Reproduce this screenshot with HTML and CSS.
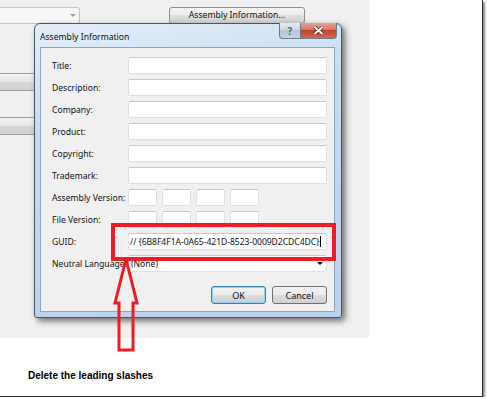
FILE: index.html
```html
<!DOCTYPE html>
<html lang="en">
<head>
    <meta charset="UTF-8">
    <title>Assembly Information</title>
    <link rel="stylesheet" href="styles.css">
</head>
<body>
    <div class="page">
        <div class="app">
            <!-- controls of the project page behind the dialog -->
            <div class="toolbar">
                <div class="combo"><span class="combo-arrow"></span></div>
                <div class="bg-button">Assembly Information...</div>
            </div>
            <div class="bg-bar bar-one"></div>
            <div class="bg-bar bar-two"></div>

            <div class="dialog">
                <div class="titlebar">
                    <span class="title">Assembly Information</span>
                    <div class="caption-buttons">
                        <span class="help-btn">?</span>
                        <span class="close-btn">
                            <svg width="11" height="9" viewBox="0 0 11 9">
                                <path d="M1.5 1 L9.5 8 M9.5 1 L1.5 8" stroke="#5a2418" stroke-width="3.4" fill="none"/>
                                <path d="M1.5 1 L9.5 8 M9.5 1 L1.5 8" stroke="#fff" stroke-width="2" fill="none"/>
                            </svg>
                        </span>
                    </div>
                </div>
                <div class="client">
                    <div class="form">
                        <label>Title:</label><div class="field"></div>
                        <label>Description:</label><div class="field"></div>
                        <label>Company:</label><div class="field"></div>
                        <label>Product:</label><div class="field"></div>
                        <label>Copyright:</label><div class="field"></div>
                        <label>Trademark:</label><div class="field"></div>
                        <label>Assembly Version:</label>
                        <div class="version">
                            <div class="field"></div><div class="field"></div><div class="field"></div><div class="field"></div>
                        </div>
                        <label>File Version:</label>
                        <div class="version">
                            <div class="field"></div><div class="field"></div><div class="field"></div><div class="field"></div>
                        </div>
                        <label>GUID:</label>
                        <div class="field guid">// {6B8F4F1A-0A65-421D-8523-0009D2CDC4DC}<span class="caret"></span></div>
                        <label>Neutral Language:</label>
                        <div class="field select">(None)<span class="select-arrow"></span></div>
                    </div>
                    <div class="buttons">
                        <button class="btn btn-default">OK</button>
                        <button class="btn">Cancel</button>
                    </div>
                </div>
            </div>
        </div>

        <!-- red annotations -->
        <div class="highlight"></div>
        <svg class="arrow" width="30" height="100" viewBox="0 0 30 100">
            <polygon points="13,3 24,47 20,47 20,94 6,94 6,47 2,47" fill="none" stroke="#ee1c24" stroke-width="3" stroke-linejoin="miter"/>
        </svg>

        <p class="note">Delete the leading slashes</p>
    </div>
</body>
</html>
```

FILE: styles.css
```css
body {
    margin: 0;
    background-color: #fff;
    font-family: "Noto Sans", "Open Sans", sans-serif;
    color: #111;
}

.page {
    position: relative;
    width: 483px;
    height: 397px;
    box-sizing: border-box;
    border-right: 1px solid #2b2b2b;
    border-bottom: 1px solid #2b2b2b;
    box-shadow: 2px 2px 2px rgba(0, 0, 0, 0.45);
}

.app {
    position: relative;
    width: 369px;
    height: 338px;
    background-color: #f0f0f0;
    overflow: hidden;
}

/* background controls */
.toolbar {
    display: flex;
    padding-top: 7px;
}

.combo {
    width: 80px;
    height: 17px;
    box-sizing: border-box;
    border: 1px solid #c9c9c9;
    border-left: none;
    border-radius: 0 3px 3px 0;
    background-color: #f7f7f7;
    display: flex;
    justify-content: flex-end;
    align-items: center;
    padding-right: 3px;
}

.combo-arrow {
    border-left: 3px solid transparent;
    border-right: 3px solid transparent;
    border-top: 3px solid #a0a0a0;
}

.bg-button {
    margin-left: 89px;
    width: 136px;
    height: 17px;
    box-sizing: border-box;
    border: 1px solid #8e8f8f;
    border-radius: 3px;
    background: linear-gradient(#f4f4f4, #ececec 50%, #dedede 50%, #d2d2d2);
    font-size: 8.6px;
    line-height: 15px;
    text-align: center;
}

.bg-bar {
    width: 40px;
    height: 18px;
    box-sizing: border-box;
    border: 1px solid #9c9c9c;
    border-left: none;
    background: linear-gradient(#f2f2f2, #e6e6e6 50%, #d8d8d8 50%, #d0d0d0);
}

.bar-one {
    margin-top: 49px;
}

.bar-two {
    margin-top: 26px;
}

/* dialog window */
.dialog {
    position: absolute;
    left: 34px;
    top: 23px;
    width: 308px;
    height: 295px;
    box-sizing: border-box;
    border: 1px solid #46566a;
    border-radius: 6px 6px 3px 3px;
    background: linear-gradient(170deg, #e4eef9 0%, #c7dbf0 30%, #b9d1ea 100%);
    box-shadow: 3px 3px 6px rgba(0, 0, 0, 0.55);
    display: flex;
    flex-direction: column;
    padding: 0 6px 5px 5px;
}

.titlebar {
    height: 23px;
    display: flex;
    justify-content: space-between;
    align-items: flex-start;
    margin-right: -2px;
}

.title {
    font-size: 8.6px;
    line-height: 12px;
    padding-top: 7px;
}

.caption-buttons {
    display: flex;
    margin-top: -1px;
}

.help-btn,
.close-btn {
    height: 16px;
    box-sizing: border-box;
    display: flex;
    justify-content: center;
    align-items: center;
    border: 1px solid #6d7b8d;
    border-top: none;
}

.help-btn {
    width: 21px;
    border-radius: 0 0 0 4px;
    border-right: none;
    background: linear-gradient(#e3ebf4, #c9d6e4 50%, #b7c6d8 50%, #c4d2e2);
    font-size: 10px;
    font-weight: bold;
    color: #5a6570;
}

.close-btn {
    width: 37px;
    border-radius: 0 0 4px 0;
    background: linear-gradient(#e8a393, #d4715f 50%, #c2422c 50%, #cf6b51);
}

.client {
    flex: 1;
    background-color: #f0f0f0;
    border: 1px solid #8fa4be;
    padding: 9px 0 0 11px;
}

.form {
    display: grid;
    grid-template-columns: 76px 199px;
    grid-auto-rows: 17px;
    row-gap: 5px;
    font-size: 8.6px;
}

.form label {
    display: flex;
    align-items: center;
    white-space: nowrap;
}

.field {
    background-color: #fff;
    box-sizing: border-box;
    border: 1px solid #dde1e6;
    border-top-color: #c6cad0;
    border-radius: 2px;
}

.version {
    display: flex;
    gap: 5px;
}

.version .field {
    width: 29px;
}

.guid {
    display: flex;
    align-items: center;
    padding-left: 1px;
    white-space: nowrap;
    letter-spacing: -0.05px;
}

.caret {
    width: 1px;
    height: 11px;
    background-color: #000;
    margin-left: 1px;
}

.select {
    display: flex;
    align-items: center;
    justify-content: space-between;
    padding: 0 3px 0 2px;
}

.select-arrow {
    border-left: 3px solid transparent;
    border-right: 3px solid transparent;
    border-top: 3px solid #000;
}

.buttons {
    width: 275px;
    display: flex;
    justify-content: flex-end;
    gap: 6px;
    margin-top: 14px;
}

.btn {
    width: 55px;
    height: 18px;
    padding: 0;
    border: 1px solid #707070;
    border-radius: 3px;
    background: linear-gradient(#f2f2f2, #ebebeb 50%, #dddddd 50%, #cfcfcf);
    font-family: "Noto Sans", sans-serif;
    font-size: 9px;
    color: #111;
}

.btn-default {
    border-color: #3c7fb1;
    box-shadow: inset 0 0 0 1px #98d1ef;
}

/* annotations */
.highlight {
    position: absolute;
    left: 111px;
    top: 223px;
    width: 225px;
    height: 38px;
    box-sizing: border-box;
    border: 4px solid #ee1c24;
}

.arrow {
    position: absolute;
    left: 113px;
    top: 256px;
}

.note {
    margin: 0;
    padding: 32px 0 0 28px;
    font-family: "Liberation Sans", Arial, sans-serif;
    font-size: 10px;
    font-weight: bold;
    color: #000;
}
```
